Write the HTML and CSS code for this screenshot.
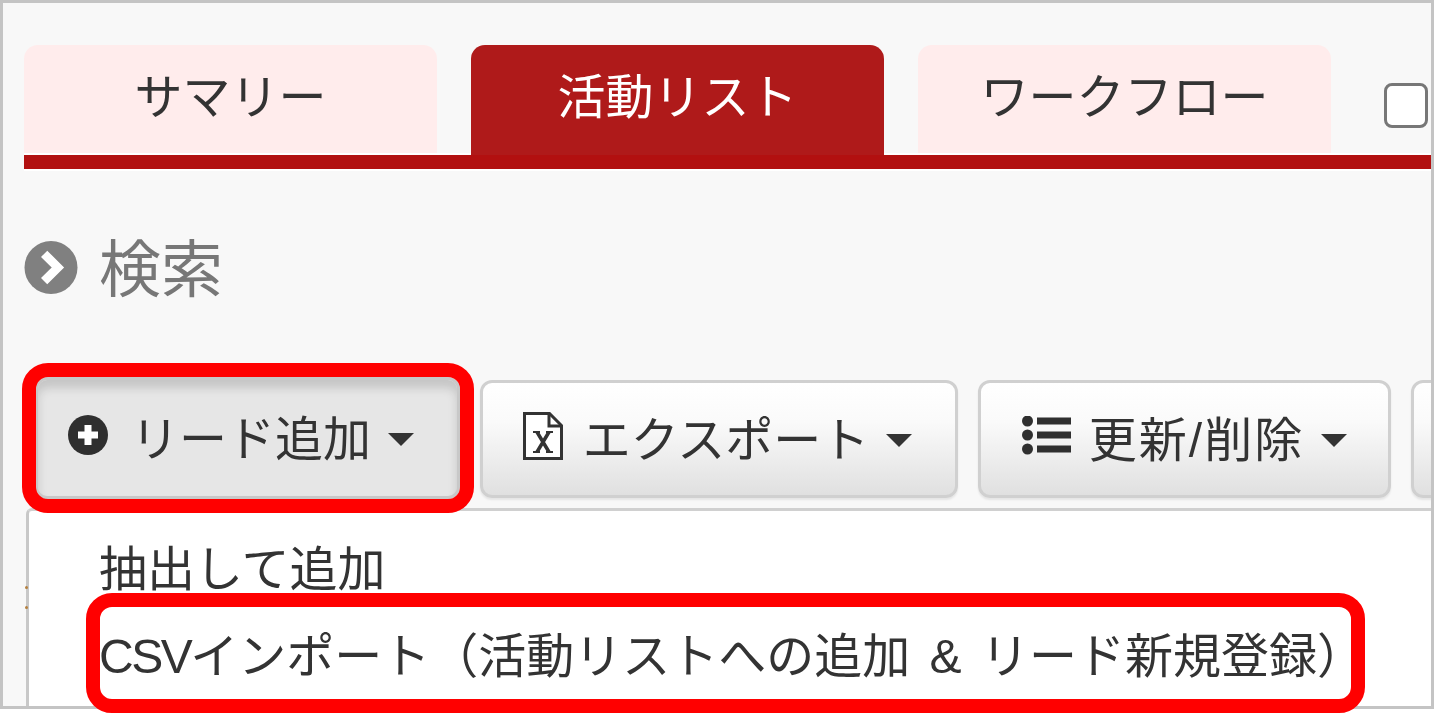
FILE: index.html
```html
<!DOCTYPE html>
<html lang="ja">
<head>
    <meta charset="UTF-8">
    <title>活動リスト</title>
    <link rel="stylesheet" href="styles.css">
</head>
<body>
    <div class="frame">
        <div class="tabs">
            <a class="tab">サマリー</a>
            <a class="tab active">活動リスト</a>
            <a class="tab">ワークフロー</a>
            <span class="check"></span>
        </div>

        <div class="search-head">
            <svg class="search-icon" viewBox="0 0 54 54">
                <circle cx="27" cy="27" r="27" fill="#808080"/>
                <path d="M20 13l14 14-14 14" fill="none" stroke="#fff" stroke-width="9"/>
            </svg>
            <span>検索</span>
        </div>

        <div class="toolbar">
            <button class="btn pressed">
                <svg class="icon" viewBox="0 0 40 40">
                    <circle cx="20" cy="20" r="20" fill="#2f2f2f"/>
                    <path d="M20 10v20M10 20h20" stroke="#fff" stroke-width="7"/>
                </svg>
                <span class="label">リード追加</span>
                <i class="caret"></i>
            </button>
            <button class="btn export">
                <svg class="file-icon" viewBox="0 0 40 48">
                    <path d="M1.5 1.5h25l12 12v33H1.5z" fill="#fff" stroke="#333" stroke-width="3"/>
                    <path d="M26 2v12h12" fill="none" stroke="#333" stroke-width="3"/>
                    <path d="M14 20l12 20M26 20L14 40" fill="none" stroke="#333" stroke-width="3.5"/>
                    <path d="M10 20h7M23 20h7M10 40h7M23 40h7" stroke="#333" stroke-width="2"/>
                </svg>
                <span class="label">エクスポート</span>
                <i class="caret"></i>
            </button>
            <button class="btn update">
                <svg class="list-icon" viewBox="0 0 49 40">
                    <circle cx="5.5" cy="5" r="5.5" fill="#2f2f2f"/>
                    <circle cx="5.5" cy="19" r="5.5" fill="#2f2f2f"/>
                    <circle cx="5.5" cy="33" r="5.5" fill="#2f2f2f"/>
                    <path d="M15 5h34M15 19h34M15 33h34" stroke="#2f2f2f" stroke-width="7"/>
                </svg>
                <span class="label">更新/削除</span>
                <i class="caret"></i>
            </button>
            <button class="btn more"></button>
        </div>

        <ul class="menu">
            <li>抽出して追加</li>
            <li><span class="latin">CSV</span>インポート（活動リストへの追加 &amp; リード新規登録）</li>
        </ul>
    </div>

    <div class="mark mark-button"></div>
    <div class="mark mark-item"></div>
    <i class="speck speck-a"></i>
    <i class="speck speck-b"></i>
</body>
</html>
```

FILE: styles.css
```css
html, body { margin: 0; height: 100%; overflow: hidden; background: #fff; }
body {
    position: relative;
    font-family: "Liberation Sans", "Noto Sans CJK JP", sans-serif;
    font-size: 48px;
    color: #333;
}

.frame {
    box-sizing: border-box;
    width: 1434px;
    height: 709px;
    padding: 42px 0 0 21px;
    border: 3px solid #c4c4c4;
    background: #f8f8f8;
    overflow: hidden;
    display: flex;
    flex-direction: column;
    filter: blur(0.5px);
}

.tabs {
    display: flex;
    align-items: flex-start;
    height: 110px;
    flex-shrink: 0;
    border-bottom: 14px solid #b21010;
    background: linear-gradient(to top, #fff 2px, transparent 2px);
    box-shadow: 0 2px 0 #fff;
}
.tab {
    width: 413px;
    height: 108px;
    margin-right: 34px;
    line-height: 106px;
    text-align: center;
    background: #ffecec;
    border-radius: 14px 14px 0 0;
}
.tab.active {
    height: 110px;
    background: #af1a1a;
    color: #fff;
}
.check {
    box-sizing: border-box;
    width: 44px;
    height: 45px;
    margin: 38px 0 0 19px;
    background: #fff;
    border: 3px solid #777;
    border-radius: 8px;
}

.search-head {
    display: flex;
    align-items: center;
    gap: 21px;
    height: 53px;
    margin-top: 72px;
    flex-shrink: 0;
    font-size: 62px;
    color: #777;
}
.search-head span { margin-top: -6px; }
.search-icon { width: 54px; height: 53px; }

.toolbar {
    display: flex;
    align-items: flex-start;
    gap: 20px;
    height: 118px;
    margin: 86px 0 0 11px;
    flex-shrink: 0;
}
.btn {
    box-sizing: border-box;
    display: flex;
    align-items: center;
    justify-content: center;
    height: 118px;
    padding: 0 0 6px;
    flex-shrink: 0;
    border: 3px solid #d0d0d0;
    border-radius: 12px;
    background: linear-gradient(#fff, #fafafa 35%, #e0e0e0);
    box-shadow: 0 2px 2px rgba(0, 0, 0, 0.08);
    font: inherit;
    color: inherit;
}
.btn.pressed {
    width: 425px;
    height: 122px;
    margin-top: -3px;
    padding-right: 13px;
    border-color: #c8c8c8;
    background: #e6e6e6;
    box-shadow: inset 0 8px 10px rgba(0, 0, 0, 0.14);
}
.btn.export { width: 478px; padding-right: 3px; }
.btn.update { width: 413px; letter-spacing: 2px; }
.btn.more { width: 100px; }

.icon { width: 40px; height: 40px; margin-right: 23px; }
.file-icon { width: 40px; height: 48px; margin-right: 20px; }
.list-icon { width: 49px; height: 40px; margin-right: 18px; }
.caret {
    width: 0;
    height: 0;
    margin: 8px 0 0 17px;
    border-top: 13px solid #333;
    border-left: 13px solid transparent;
    border-right: 13px solid transparent;
}

.menu {
    flex: 1;
    margin: 10px 0 0 2px;
    padding: 15px 0 0 70px;
    list-style: none;
    background: #fff;
    border-top: 3px solid #d0d0d0;
    border-left: 3px solid #c8c8c8;
    border-top-left-radius: 6px;
}
.menu li { line-height: 87px; white-space: nowrap; word-spacing: 6px; }
.latin { letter-spacing: -2.5px; }

/* red call-outs drawn over the page */
.mark {
    position: absolute;
    box-sizing: border-box;
    border: 14px solid #f00;
    border-radius: 26px;
}
.mark-button { left: 22px; top: 363px; width: 452px; height: 150px; }
.mark-item { left: 86px; top: 593px; width: 1279px; height: 120px; }

.speck {
    position: absolute;
    left: 25px;
    width: 3px;
    height: 3px;
    border-radius: 50%;
    background: #b5803f;
}
.speck-a { top: 586px; }
.speck-b { top: 606px; }
```
